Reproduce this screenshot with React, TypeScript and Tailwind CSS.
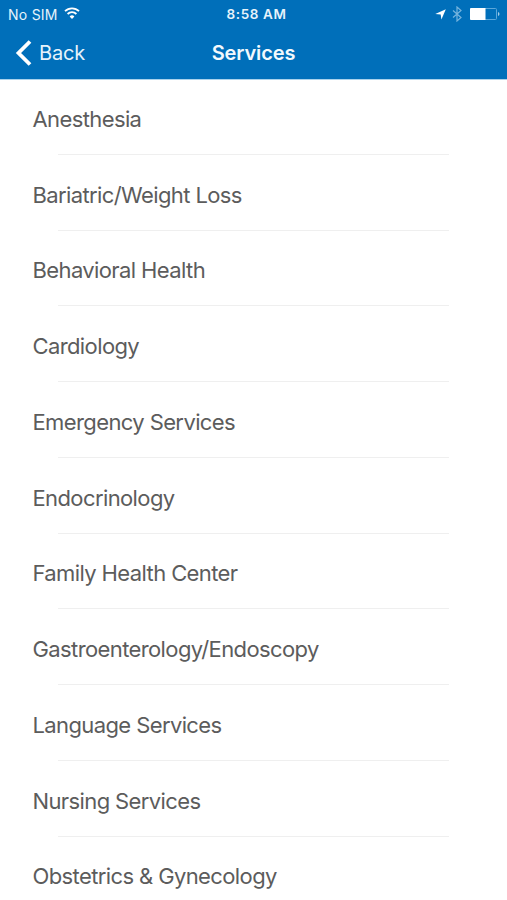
import React from "react";

const services = [
  "Anesthesia",
  "Bariatric/Weight Loss",
  "Behavioral Health",
  "Cardiology",
  "Emergency Services",
  "Endocrinology",
  "Family Health Center",
  "Gastroenterology/Endoscopy",
  "Language Services",
  "Nursing Services",
  "Obstetrics & Gynecology",
];

const App = () => {
  return (
    <div className="w-full h-[900px] overflow-hidden bg-white font-['Inter',sans-serif]">
      <header className="h-20 bg-[#006fba] text-white border-b border-[#a9d2ec]">
        <div className="h-7 grid grid-cols-3 items-center">
          <div className="flex items-center pl-2 gap-1.5 text-[14px] text-[#e6f3fb]">
            <span className="tracking-[0.25px]">No SIM</span>
            <svg width="16" height="12" viewBox="0 0 16 12" fill="none" stroke="white" strokeWidth="1.8" className="-mt-0.5">
              <path d="M1 4.2a10 10 0 0 1 14 0M3.6 7a6.2 6.2 0 0 1 8.8 0" />
              <path d="M8 12L5.6 9.4a3.5 3.5 0 0 1 4.8 0z" fill="white" stroke="none" />
            </svg>
          </div>
          <span className="pl-1.5 text-center text-[13.5px] font-semibold tracking-[0.6px] text-[#e6f3fb]">
            8:58 AM
          </span>
          <div className="flex items-center justify-end pr-[7px]">
            <svg width="11" height="11" viewBox="0 0 12 12" fill="white" className="mr-1.5">
              <path d="M11.8.3L7 11.5 6.2 6 .3 5.4z" />
            </svg>
            <svg width="10" height="16" viewBox="0 0 10 16" fill="none" stroke="#76b4de" strokeWidth="1.2" className="mr-2">
              <path d="M1 4.5l8 7-4 3.5V1l4 3.5-8 7" />
            </svg>
            <svg width="30" height="12" viewBox="0 0 30 12" fill="none">
              <rect x=".5" y=".5" width="26" height="11" rx="1" stroke="#5ca7da" />
              <path d="M1 0h14.5v12H1a1 1 0 0 1-1-1V1a1 1 0 0 1 1-1z" fill="white" />
              <path d="M28 4v4c2-.7 2-3.3 0-4z" fill="#a5cee8" />
            </svg>
          </div>
        </div>
        <div className="h-[49px] grid grid-cols-3 items-center">
          <div className="flex items-center pl-[15px] gap-[7px] text-[20px] text-[#e6f3fb]">
            <svg width="17" height="26" viewBox="0 0 17 26" fill="none" stroke="white" strokeWidth="3.8">
              <path d="M15 1.5L3.5 13 15 24.5" />
            </svg>
            <span className="tracking-[-0.2px]">Back</span>
          </div>
          <h1 className="text-center text-[20px] font-semibold tracking-[-0.1px] text-[#f2f9fd]">Services</h1>
        </div>
      </header>
      <ul className="-mt-px">
        {services.map((name) => (
          <li key={name} className="h-[75.75px] flex flex-col">
            <div className="flex-1 flex items-center pl-[32.5px] pt-1.5 text-[22px] tracking-[-0.61px] text-[#5c5c5c]">
              {name}
            </div>
            <div className="mx-[58px] h-px bg-[#efefef]" />
          </li>
        ))}
      </ul>
    </div>
  );
};

export default App;
